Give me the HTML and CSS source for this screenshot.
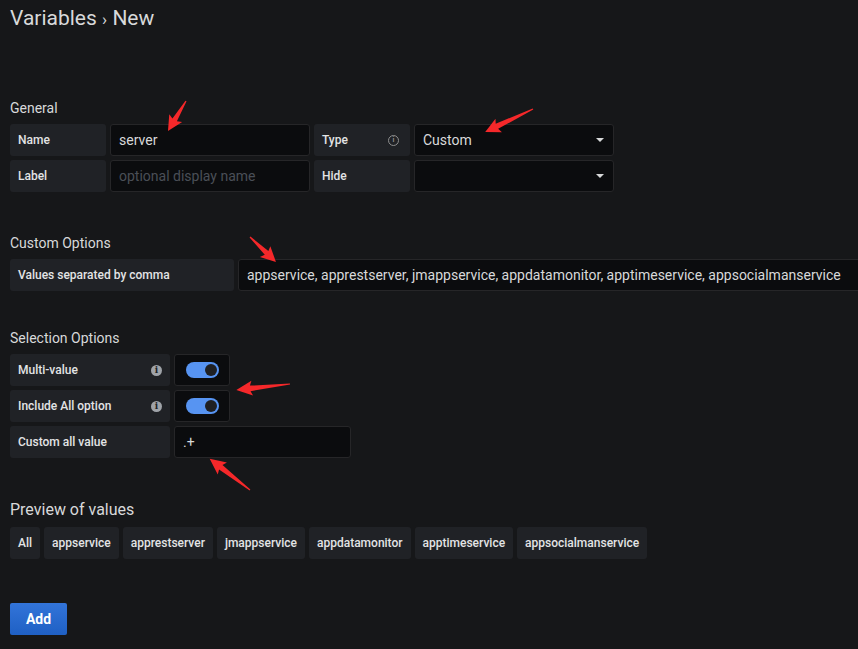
FILE: index.html
```html
<!DOCTYPE html>
<html>
<head>
<meta charset="utf-8">
<link rel="stylesheet" href="styles.css">
</head>
<body>
<div class="page">
  <h2 class="title">Variables <span class="sep">›</span> New</h2>

  <h5 class="heading h-general">General</h5>
  <div class="rows">
    <div class="row">
      <div class="label w96">Name</div>
      <div class="input w200">server</div>
      <div class="label w96 between">Type <span class="info-outline">i</span></div>
      <div class="input select w200">Custom<span class="caret"></span></div>
    </div>
    <div class="row">
      <div class="label w96">Label</div>
      <div class="input w200 placeholder">optional display name</div>
      <div class="label w96">Hide</div>
      <div class="input select w200"><span class="caret"></span></div>
    </div>
  </div>

  <h5 class="heading h-custom">Custom Options</h5>
  <div class="rows">
    <div class="row">
      <div class="label w224">Values separated by comma</div>
      <div class="input wide">appservice, apprestserver, jmappservice, appdatamonitor, apptimeservice, appsocialmanservice</div>
    </div>
  </div>

  <h5 class="heading h-select">Selection Options</h5>
  <div class="rows">
    <div class="row">
      <div class="label w160 between">Multi-value <span class="info-fill">i</span></div>
      <div class="input toggle-box"><span class="toggle"><span class="knob"></span></span></div>
    </div>
    <div class="row">
      <div class="label w160 between">Include All option <span class="info-fill">i</span></div>
      <div class="input toggle-box"><span class="toggle"><span class="knob"></span></span></div>
    </div>
    <div class="row">
      <div class="label w160">Custom all value</div>
      <div class="input w177">.+</div>
    </div>
  </div>

  <h4 class="heading h-preview">Preview of values</h4>
  <div class="chips">
    <span class="chip">All</span>
    <span class="chip">appservice</span>
    <span class="chip">apprestserver</span>
    <span class="chip">jmappservice</span>
    <span class="chip">appdatamonitor</span>
    <span class="chip">apptimeservice</span>
    <span class="chip">appsocialmanservice</span>
  </div>

  <button class="btn-add">Add</button>
</div>

<svg class="arrows" width="858" height="649" viewBox="0 0 858 649">
  <g fill="#f5282a">
    <polygon transform="translate(186,101) rotate(121)" points="0,-0.6 22,-2.6 20,-7.5 35,0 20,7.5 22,2.6 0,0.6"/>
    <polygon transform="translate(533,109) rotate(154.4)" points="0,-0.6 40,-2.8 38,-7.5 53,0 38,7.5 40,2.8 0,0.6"/>
    <polygon transform="translate(250,237) rotate(43.9)" points="0,-0.6 23,-2.6 21,-7.5 36,0 21,7.5 23,2.6 0,0.6"/>
    <polygon transform="translate(290,384) rotate(173.7)" points="0,-0.6 40,-2.8 38,-7.5 54,0 38,7.5 40,2.8 0,0.6"/>
    <polygon transform="translate(250,490) rotate(217.8)" points="0,-0.6 37,-2.8 35,-7.5 51,0 35,7.5 37,2.8 0,0.6"/>
  </g>
</svg>
</body>
</html>
```

FILE: styles.css
```css
html, body {
  margin: 0;
  padding: 0;
  background: #161719;
  overflow: hidden;
}
body {
  width: 858px;
  height: 649px;
  position: relative;
  font-family: Roboto, "Liberation Sans", Arial, sans-serif;
  color: #d8d9da;
}
.page {
  padding: 0 10px;
}
.title {
  margin: 0;
  height: 36px;
  line-height: 36px;
  font-size: 21px;
  font-weight: 400;
  color: #d8d9da;
}
.title .sep {
  font-size: 17px;
}
.heading {
  margin: 0;
  font-weight: 400;
  font-size: 14px;
  line-height: 16px;
  color: #d8d9da;
}
.h-general { margin-top: 64px; margin-bottom: 8px; }
.h-custom { margin-top: 43px; margin-bottom: 8px; }
.h-select { margin-top: 39px; margin-bottom: 8px; }
.h-preview {
  margin-top: 43px;
  margin-bottom: 8px;
  font-size: 16px;
  line-height: 18px;
}
.rows {
  display: flex;
  flex-direction: column;
  gap: 4px;
}
.row {
  display: flex;
  gap: 4px;
  height: 32px;
}
.label {
  box-sizing: border-box;
  height: 32px;
  background: #202226;
  border-radius: 3px;
  padding: 0 8px;
  display: flex;
  align-items: center;
  font-size: 12px;
  font-weight: 500;
  color: #e3e4e5;
  white-space: nowrap;
  flex: none;
}
.between { justify-content: space-between; }
.w96 { width: 96px; }
.w160 { width: 160px; }
.w224 { width: 224px; }
.input {
  box-sizing: border-box;
  height: 32px;
  background: #0b0c0e;
  border: 1px solid #262628;
  border-radius: 3px;
  padding: 0 8px;
  display: flex;
  align-items: center;
  font-size: 14px;
  color: #d8d9da;
  white-space: nowrap;
  flex: none;
}
.w200 { width: 200px; }
.w177 { width: 177px; }
.wide { width: 640px; }
.placeholder { color: #4a4f57; }
.select { justify-content: space-between; }
.caret {
  margin-left: auto;
  width: 0;
  height: 0;
  border-left: 4px solid transparent;
  border-right: 4px solid transparent;
  border-top: 4px solid #d8d9da;
  margin-right: 1px;
}
.info-outline {
  width: 9px;
  height: 9px;
  border: 1px solid #8e8e8e;
  border-radius: 50%;
  font-size: 7px;
  line-height: 9px;
  text-align: center;
  color: #8e8e8e;
  font-weight: 700;
  margin-right: 3px;
}
.info-fill {
  width: 11px;
  height: 11px;
  border-radius: 50%;
  background: #9fa3a8;
  color: #202226;
  font-size: 9px;
  line-height: 11px;
  text-align: center;
  font-weight: 900;
  font-family: "DejaVu Serif", serif;
}
.toggle-box {
  width: 56px;
  justify-content: center;
  padding: 0;
}
.toggle {
  width: 33px;
  height: 16px;
  border-radius: 8px;
  background: #5794f2;
  display: flex;
  align-items: center;
  justify-content: flex-end;
  padding: 0 2px;
  box-sizing: border-box;
}
.knob {
  width: 12px;
  height: 12px;
  border-radius: 50%;
  background: #1f2023;
}
.chips {
  display: flex;
  gap: 4px;
}
.chip {
  height: 32px;
  background: #202226;
  border-radius: 3px;
  padding: 0 8px;
  display: flex;
  align-items: center;
  font-size: 12px;
  font-weight: 500;
  color: #e3e4e5;
}
.btn-add {
  margin-top: 44px;
  display: block;
  width: 57px;
  height: 32px;
  border: none;
  border-radius: 2px;
  background: linear-gradient(#3274d9, #1f60c4);
  color: #ffffff;
  font-family: Roboto, "Liberation Sans", Arial, sans-serif;
  font-size: 14px;
  font-weight: 700;
  padding: 0;
}
.arrows {
  position: absolute;
  left: 0;
  top: 0;
  pointer-events: none;
}
```
